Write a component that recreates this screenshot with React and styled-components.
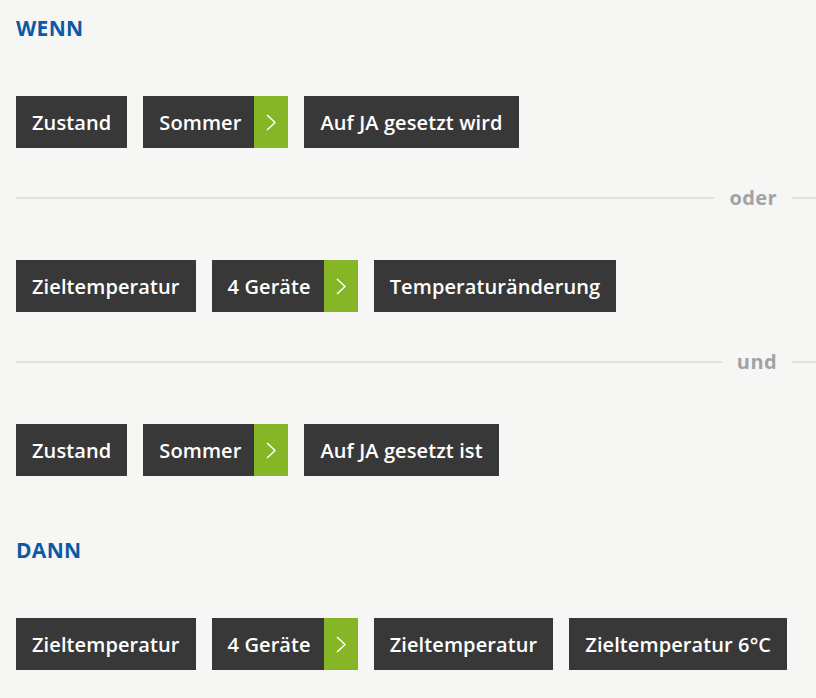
import React from "react";
import styled, { createGlobalStyle } from "styled-components";

const Global = createGlobalStyle`
  html, body {
    margin: 0;
    padding: 0;
    background: #f6f6f4;
  }
  body {
    font-family: "Open Sans", "Liberation Sans", sans-serif;
    -webkit-font-smoothing: antialiased;
  }
`;

const Page = styled.div`
  padding: 16px 0 0 16px;
  min-height: 100vh;
  box-sizing: border-box;
  overflow: hidden;
`;

const Heading = styled.div`
  color: #0a5aa8;
  font-size: 21px;
  line-height: 24px;
  font-weight: 700;
  letter-spacing: 0.3px;
  margin-top: ${p => p.$top || 0}px;
`;

const Row = styled.div`
  display: flex;
  gap: 16px;
  margin-top: ${p => p.$top || 0}px;
`;

const Chip = styled.div`
  display: flex;
  align-items: stretch;
  height: 52px;
  background: #383838;
  color: #fff;
  font-size: 20px;
  font-weight: 600;
  letter-spacing: 0.1px;
`;

const Label = styled.span`
  display: flex;
  align-items: center;
  padding: ${p => (p.$arrow ? "0 13px 0 16px" : "0 16px")};
`;

const Arrow = styled.span`
  width: 34px;
  background: #86b526;
  display: flex;
  align-items: center;
  justify-content: center;
`;

const Divider = styled.div`
  display: flex;
  align-items: center;
  margin: 38px 0 50px;
  height: 24px;
`;

const Line = styled.div`
  height: 2px;
  background: #e2e2e0;
  flex: ${p => (p.$grow ? "1 1 auto" : "0 0 24px")};
`;

const Word = styled.span`
  color: #9fa4a4;
  font-size: 20px;
  line-height: 24px;
  font-weight: 700;
  letter-spacing: 0.4px;
  padding: 0 15px;
`;

const Chevron = () => (
  <svg width="12" height="17" viewBox="0 0 12 17" fill="none">
    <path d="M2 1 L10 8.5 L2 16" stroke="#fff" strokeWidth="1.5" />
  </svg>
);

const Tag = ({ children, arrow }) => (
  <Chip>
    <Label $arrow={arrow}>{children}</Label>
    {arrow && (
      <Arrow>
        <Chevron />
      </Arrow>
    )}
  </Chip>
);

const Sep = ({ children }) => (
  <Divider>
    <Line $grow />
    <Word>{children}</Word>
    <Line />
  </Divider>
);

export default function App() {
  return (
    <Page>
      <Global />
      <Heading>WENN</Heading>
      <Row $top={56}>
        <Tag>Zustand</Tag>
        <Tag arrow>Sommer</Tag>
        <Tag>Auf JA gesetzt wird</Tag>
      </Row>
      <Sep>oder</Sep>
      <Row>
        <Tag>Zieltemperatur</Tag>
        <Tag arrow>4 Geräte</Tag>
        <Tag>Temperaturänderung</Tag>
      </Row>
      <Sep>und</Sep>
      <Row>
        <Tag>Zustand</Tag>
        <Tag arrow>Sommer</Tag>
        <Tag>Auf JA gesetzt ist</Tag>
      </Row>
      <Heading $top={62}>DANN</Heading>
      <Row $top={56}>
        <Tag>Zieltemperatur</Tag>
        <Tag arrow>4 Geräte</Tag>
        <Tag>Zieltemperatur</Tag>
        <Tag>Zieltemperatur 6°C</Tag>
      </Row>
    </Page>
  );
}
